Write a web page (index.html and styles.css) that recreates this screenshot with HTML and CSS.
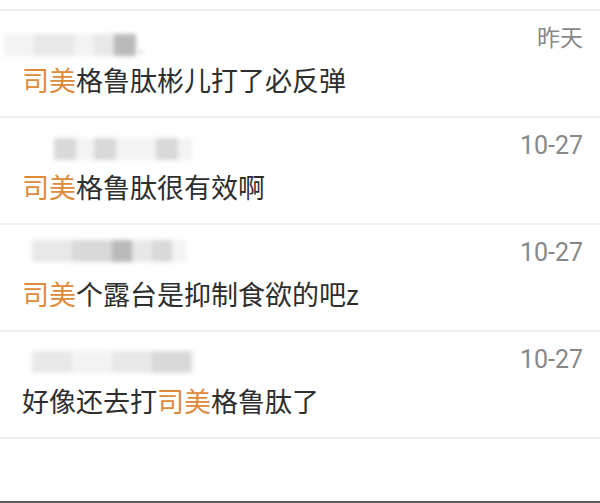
FILE: index.html
```html
<!DOCTYPE html>
<html lang="zh-CN">
<head>
    <meta charset="UTF-8">
    <meta name="viewport" content="width=device-width, initial-scale=1.0">
    <title>评论</title>
    <link rel="stylesheet" href="styles.css">
</head>
<body>
    <div class="comment-list">
        <div class="comment">
            <div class="comment-head">
                <div class="name">
                    <span class="blk w30 c1"></span>
                    <span class="blk w40 c2"></span>
                    <span class="blk w20 c1"></span>
                    <span class="blk w20 c2"></span>
                    <span class="blk w22 c4"></span>
                    <span class="dot"></span>
                </div>
                <div class="time time-cn">昨天</div>
            </div>
            <div class="text"><span class="hl">司美</span>格鲁肽彬儿打了必反弹</div>
        </div>
        <div class="comment">
            <div class="comment-head">
                <div class="name name-2">
                    <span class="blk w22 c3"></span>
                    <span class="blk w18 c1"></span>
                    <span class="blk w22 c3"></span>
                    <span class="blk w40 c1"></span>
                    <span class="blk w22 c3"></span>
                    <span class="blk w14 c1"></span>
                </div>
                <div class="time">10-27</div>
            </div>
            <div class="text"><span class="hl">司美</span>格鲁肽很有效啊</div>
        </div>
        <div class="comment">
            <div class="comment-head">
                <div class="name name-3">
                    <span class="blk w40 c2"></span>
                    <span class="blk w40 c3"></span>
                    <span class="blk w20 c4"></span>
                    <span class="blk w20 c2"></span>
                    <span class="blk w20 c3"></span>
                    <span class="blk w14 c1"></span>
                </div>
                <div class="time">10-27</div>
            </div>
            <div class="text"><span class="hl">司美</span>个露台是抑制食欲的吧z</div>
        </div>
        <div class="comment">
            <div class="comment-head">
                <div class="name name-4">
                    <span class="blk w40 c2"></span>
                    <span class="blk w40 c1"></span>
                    <span class="blk w40 c2"></span>
                    <span class="blk w40 c3"></span>
                </div>
                <div class="time">10-27</div>
            </div>
            <div class="text">好像还去打<span class="hl">司美</span>格鲁肽了</div>
        </div>
        <div class="list-end"></div>
    </div>
    <div class="bottom-bar"></div>
</body>
</html>
```

FILE: styles.css
```css
* {
    box-sizing: border-box;
}

body {
    margin: 0;
    background: #fff;
    font-family: "Noto Sans CJK SC", "Noto Sans", sans-serif;
    height: 503px;
    display: flex;
    flex-direction: column;
    overflow: hidden;
}

.comment-list {
    padding-top: 9px;
    flex: 1;
}

.comment {
    height: 107px;
    border-top: 2px solid #efefef;
    padding: 15px 17px 0 22px;
}

.comment-head {
    display: flex;
    justify-content: space-between;
    align-items: flex-start;
    height: 26px;
}

.name {
    display: flex;
    align-items: center;
    margin-left: -18px;
    margin-top: 8px;
    filter: blur(2px);
}

.name-2 {
    margin-left: 32px;
    margin-top: 5px;
}

.name-3 {
    margin-left: 10px;
    margin-top: 0;
}

.name-4 {
    margin-left: 10px;
    margin-top: 4px;
}

.blk {
    display: inline-block;
    height: 22px;
}

.w14 { width: 14px; }
.w18 { width: 18px; }
.w20 { width: 20px; }
.w22 { width: 22px; }
.w30 { width: 30px; }
.w40 { width: 40px; }

.c1 { background: #f3f3f3; }
.c2 { background: #e8e8e8; }
.c3 { background: #d9d9d9; }
.c4 { background: #bababa; }

.dot {
    width: 2px;
    height: 2px;
    background: #777;
    margin: 14px 0 0 4px;
}

.time {
    font-family: Roboto, "Noto Sans CJK SC", sans-serif;
    font-size: 25px;
    line-height: 26px;
    color: #888;
}

.time-cn {
    font-size: 23px;
}

.text {
    margin-top: 10px;
    font-size: 27px;
    line-height: 36px;
    color: #2e2e2e;
}

.hl {
    color: #de8a3a;
}

.list-end {
    border-top: 2px solid #efefef;
}

.bottom-bar {
    height: 2px;
    background: #5a5a5a;
}
```
